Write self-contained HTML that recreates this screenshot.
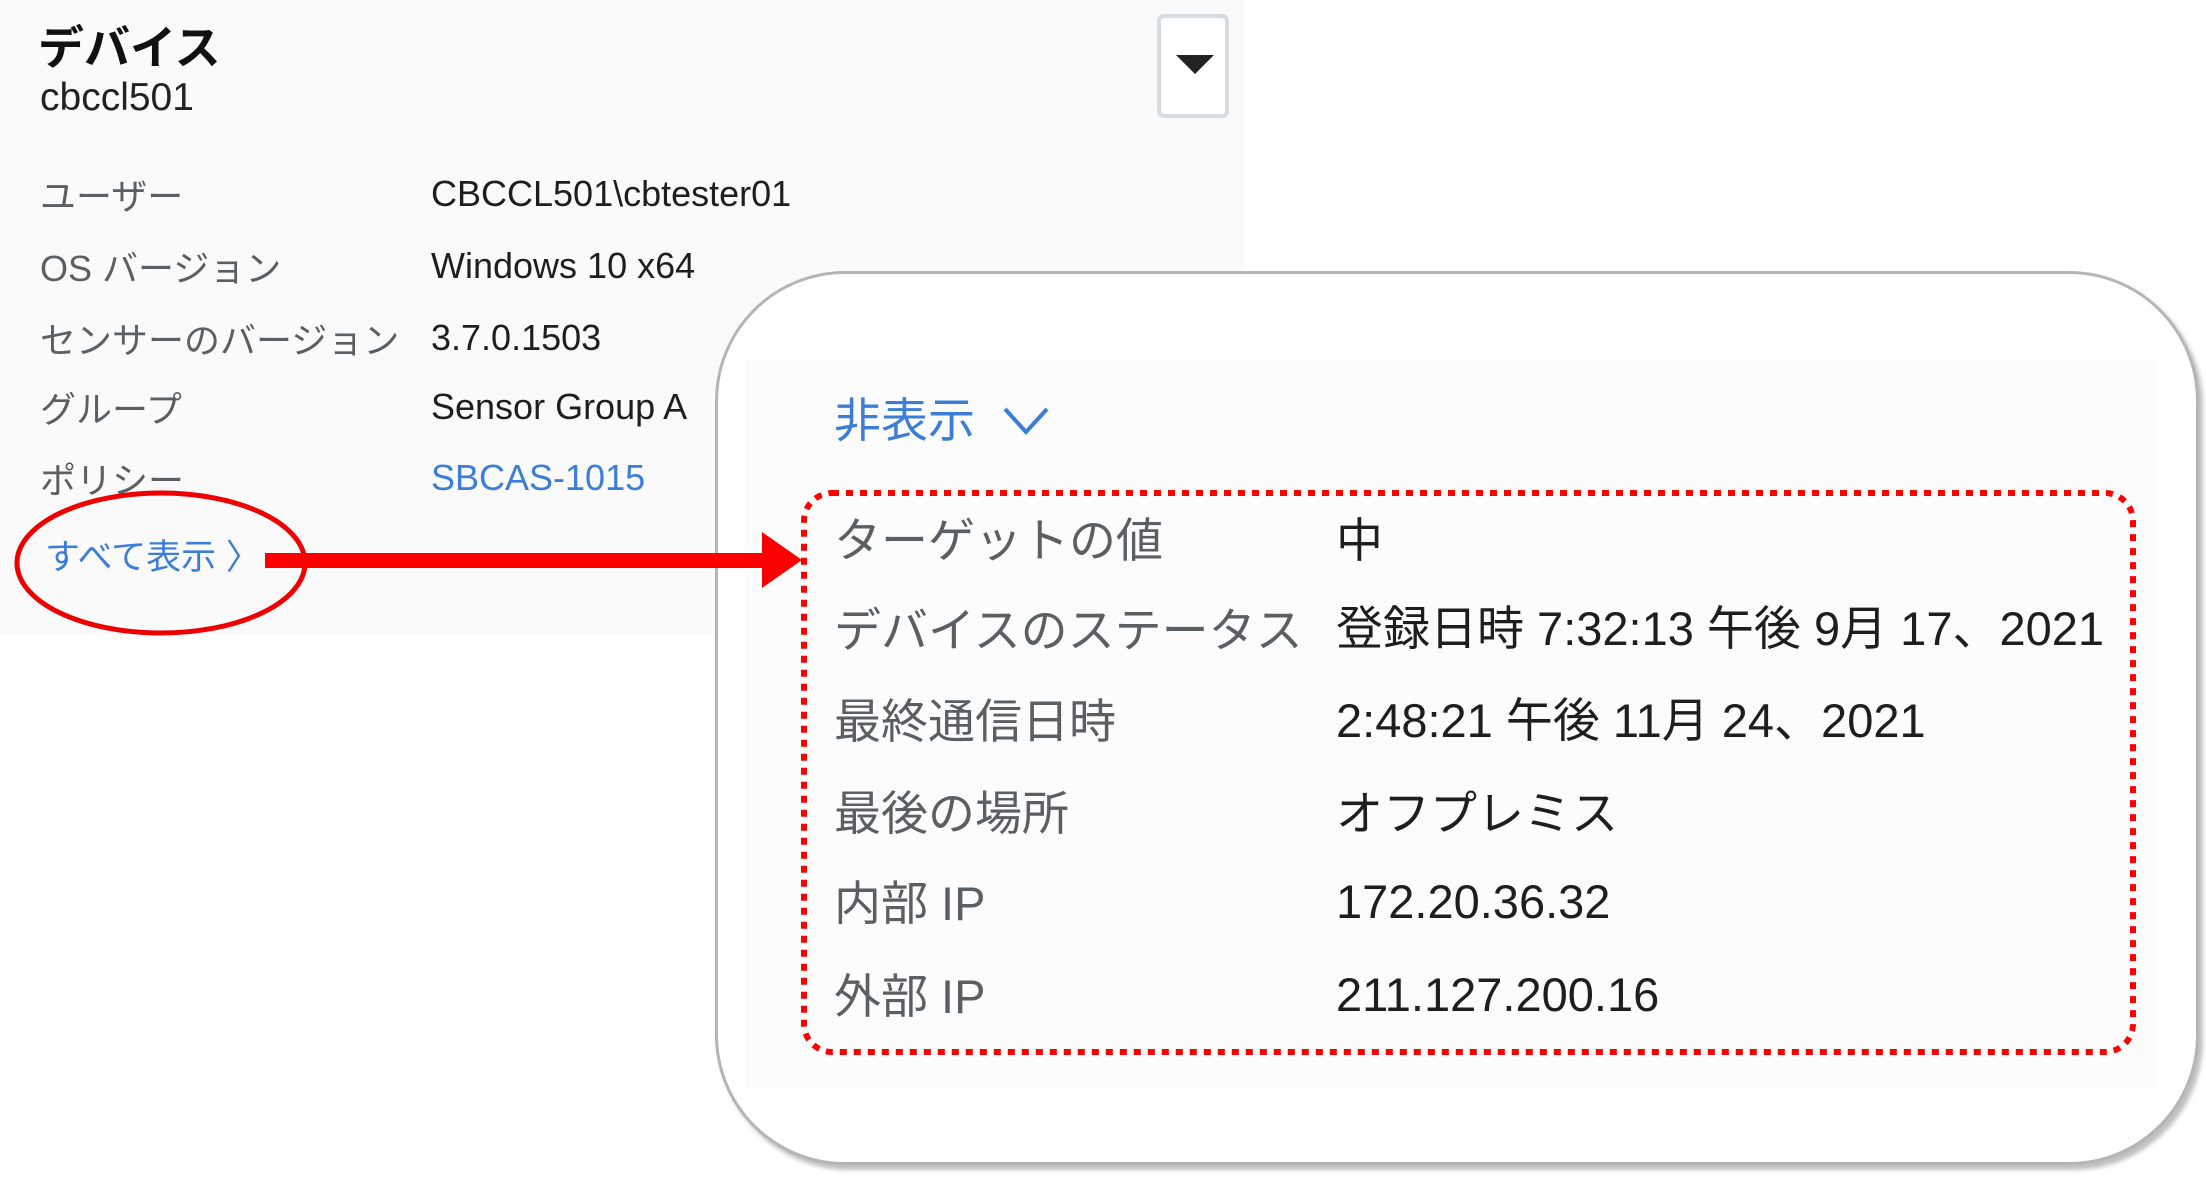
<!DOCTYPE html>
<html><head><meta charset="utf-8"><style>
body{margin:0;width:2206px;height:1180px;background:#fff;position:relative;overflow:hidden;font-family:"Liberation Sans","Noto Sans CJK JP",sans-serif;}
.a{position:absolute;white-space:nowrap;}
.lbl{color:#5a5f63;font-size:36px;line-height:40px;}
.val{color:#1e1e1e;font-size:36px;line-height:40px;}
.big{font-size:47px;line-height:56px;}
.pl{color:#5a5f63;}
.pv{color:#1e1e1e;}
</style></head><body>
<div class="a" style="left:0;top:0;width:1244px;height:634px;background:#fafafa;"></div>
<div class="a" style="left:38px;top:12px;font-size:46px;font-weight:bold;color:#111;">デバイス</div>
<div class="a" style="left:40px;top:76px;font-size:39px;color:#222;">cbccl501</div>
<div class="a" style="left:1157px;top:14px;width:64px;height:96px;border:4px solid #d5dde3;border-radius:7px;background:#fff;"></div>
<svg class="a" style="left:1176px;top:55px" width="38" height="19"><polygon points="0,0 38,0 19,19" fill="#222"/></svg>

<div class="a lbl" style="left:40px;top:177px;">ユーザー</div><div class="a val" style="left:431px;top:174px;">CBCCL501\cbtester01</div>
<div class="a lbl" style="left:40px;top:249px;">OS バージョン</div><div class="a val" style="left:431px;top:246px;">Windows 10 x64</div>
<div class="a lbl" style="left:40px;top:321px;">センサーのバージョン</div><div class="a val" style="left:431px;top:318px;">3.7.0.1503</div>
<div class="a lbl" style="left:40px;top:390px;">グループ</div><div class="a val" style="left:431px;top:387px;">Sensor Group A</div>
<div class="a lbl" style="left:40px;top:461px;">ポリシー</div><div class="a val" style="left:431px;top:458px;color:#3b7dd8;">SBCAS-1015</div>
<div class="a" style="left:45px;top:538px;font-size:35px;line-height:40px;color:#3b7dd8;">すべて表示 〉</div>

<svg class="a" style="left:0;top:0" width="900" height="700">
<ellipse cx="161" cy="563" rx="144" ry="70" fill="none" stroke="#e00" stroke-width="5"/>
</svg>

<div class="a" style="left:715px;top:271px;width:1478px;height:888px;border:3px solid #b5b5b5;border-radius:130px;background:#fff;box-shadow:4px 5px 4px rgba(0,0,0,.25);"></div>
<div class="a" style="left:745px;top:360px;width:1410px;height:728px;background:#fcfcfc;"></div>

<svg class="a" style="left:0;top:0" width="900" height="700">
<rect x="265" y="553" width="505" height="15" fill="#f00"/>
<polygon points="762,532 802,560 762,588" fill="#f00"/>
</svg>

<div class="a" style="left:834px;top:393px;font-size:47px;line-height:56px;color:#3b7dd8;">非表示</div>
<svg class="a" style="left:1002px;top:406px" width="50" height="30"><polyline points="3,3 24,26 45,3" fill="none" stroke="#3b7dd8" stroke-width="4"/></svg>

<svg class="a" style="left:0;top:0" width="2206" height="1180">
<rect x="804" y="493" width="1329" height="559" rx="28" fill="none" stroke="#f00" stroke-width="6" stroke-dasharray="7 7"/>
</svg>

<div class="a big pl" style="left:834px;top:513px;">ターゲットの値</div><div class="a big pv" style="left:1336px;top:513px;">中</div>
<div class="a big pl" style="left:834px;top:603px;">デバイスのステータス</div><div class="a big pv" style="left:1336px;top:601px;">登録日時 7:32:13 午後 9月 17、2021</div>
<div class="a big pl" style="left:834px;top:694px;">最終通信日時</div><div class="a big pv" style="left:1336px;top:693px;">2:48:21 午後 11月 24、2021</div>
<div class="a big pl" style="left:834px;top:786px;">最後の場所</div><div class="a big pv" style="left:1336px;top:786px;">オフプレミス</div>
<div class="a big pl" style="left:834px;top:876px;">内部 IP</div><div class="a big pv" style="left:1336px;top:874px;">172.20.36.32</div>
<div class="a big pl" style="left:834px;top:969px;">外部 IP</div><div class="a big pv" style="left:1336px;top:967px;">211.127.200.16</div>
</body></html>
